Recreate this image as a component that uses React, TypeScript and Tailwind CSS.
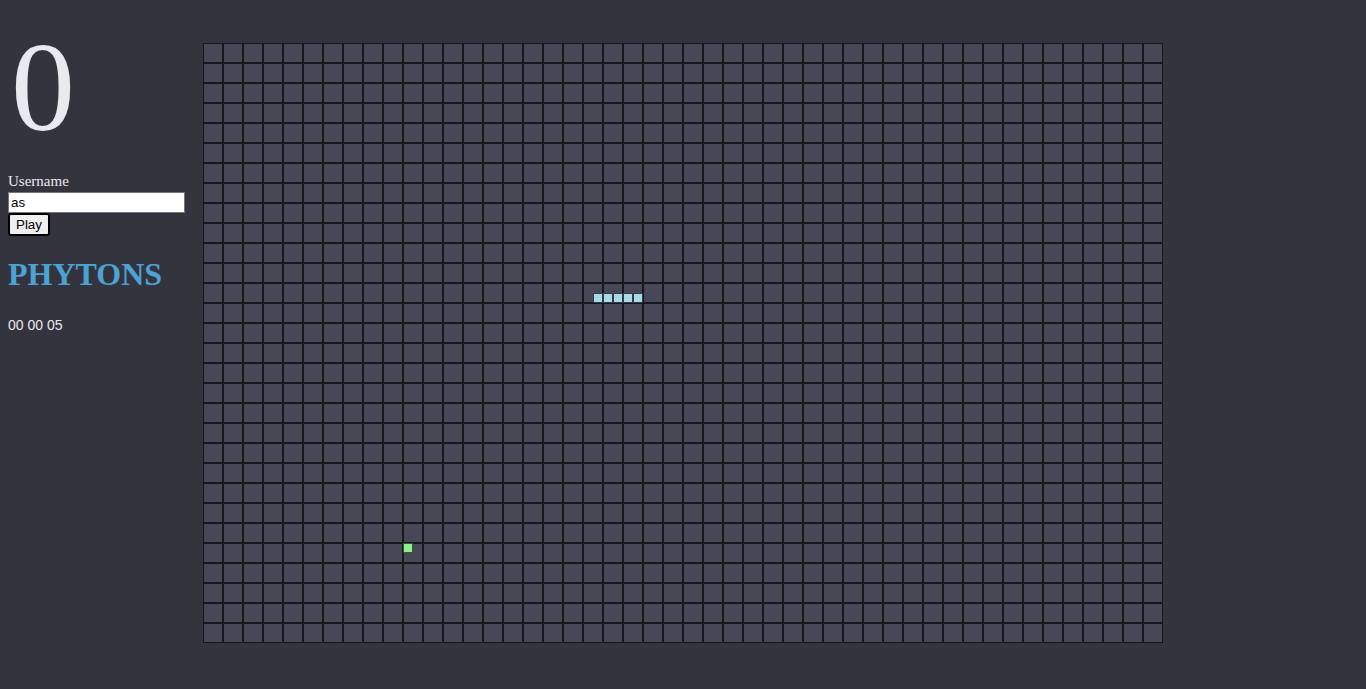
const COLS = 48;
const ROWS = 30;

const snake = [
  { x: 390, y: 250 },
  { x: 400, y: 250 },
  { x: 410, y: 250 },
  { x: 420, y: 250 },
  { x: 430, y: 250 },
];
const food = { x: 200, y: 500 };

export default function App() {
  const cells = Array.from({ length: COLS * ROWS });

  return (
    <div className="min-h-screen bg-[#34343f] flex items-start font-['Liberation_Serif',serif] text-[#e9e9f0]">
      <aside className="w-[203px] shrink-0 pl-2 pt-[23px]">
        <h1 className="text-[128px] leading-[128px] font-normal pl-[3px]">0</h1>
        <label className="block mt-[20px] text-[15px] leading-[21px]">Username</label>
        <input
          defaultValue="as"
          className="block w-[177px] h-[21px] bg-white border border-[#767676] px-[2px] text-[13.33px] text-black font-['Liberation_Sans',sans-serif] outline-none"
        />
        <button className="block h-[23px] px-[6px] bg-[#efefef] border-2 border-black rounded-[3px] text-[13.33px] text-black font-['Liberation_Sans',sans-serif] leading-none">
          Play
        </button>
        <h2 className="mt-[20px] text-[32px] leading-[37px] font-bold text-[#4ba3d3]">PHYTONS</h2>
        <p className="mt-[24px] text-[14px] font-['Liberation_Sans',sans-serif] leading-[16px]">00 00 05</p>
      </aside>

      <div className="relative mt-[43px] grid grid-cols-[repeat(48,20px)]">
        {cells.map((_, i) => (
          <div key={i} className="w-5 h-5 bg-[#474757] border border-[#16161d]" />
        ))}
        {snake.map((s, i) => (
          <div
            key={i}
            className="absolute w-[10px] h-[10px] bg-[#add8e6] border border-[#2e3c48]"
            style={{ left: s.x, top: s.y }}
          />
        ))}
        <div
          className="absolute w-[10px] h-[10px] bg-[#90ee90] border border-[#2f5a2f]"
          style={{ left: food.x, top: food.y }}
        />
      </div>
    </div>
  );
}
